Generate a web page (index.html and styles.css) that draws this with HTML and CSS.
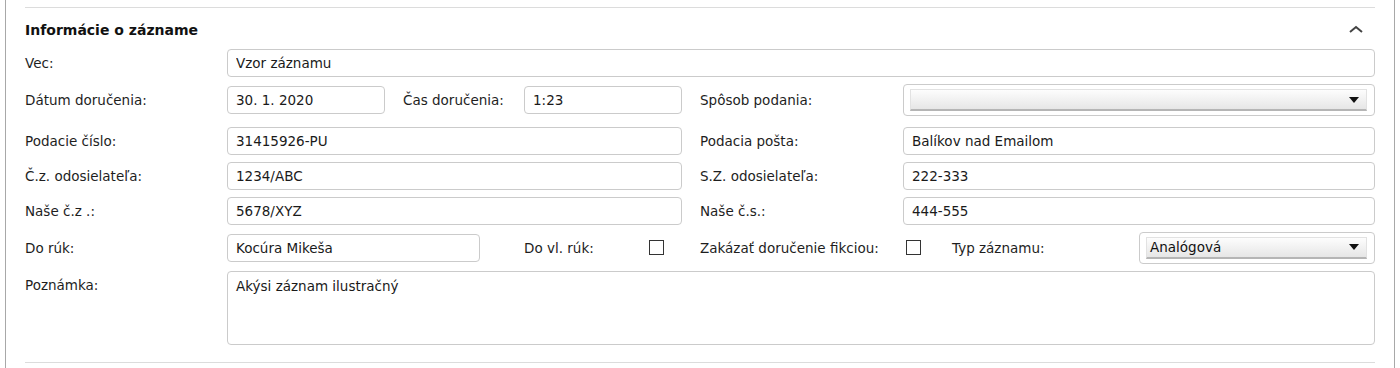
FILE: index.html
```html
<!DOCTYPE html>
<html lang="sk">
<head>
    <meta charset="UTF-8">
    <title>Informácie o zázname</title>
    <link rel="stylesheet" href="styles.css">
</head>
<body>
<div class="panel">
    <div class="section">
        <div class="section-head">
            <h3>Informácie o zázname</h3>
            <svg class="chevron" width="16" height="10" viewBox="0 0 16 10">
                <polyline points="2,8 8,3 14,8" fill="none" stroke="#444" stroke-width="2"/>
            </svg>
        </div>

        <div class="row">
            <label class="lbl">Vec:</label>
            <input class="field grow" type="text" value="Vzor záznamu">
        </div>

        <div class="row row-tall">
            <label class="lbl">Dátum doručenia:</label>
            <input class="field w-short" type="text" value="30. 1. 2020">
            <label class="lbl-mid">Čas doručenia:</label>
            <input class="field w-short" type="text" value="1:23">
            <label class="lbl-right">Spôsob podania:</label>
            <div class="select-wrap grow">
                <div class="select"><span></span><i class="arrow"></i></div>
            </div>
        </div>

        <div class="row">
            <label class="lbl">Podacie číslo:</label>
            <input class="field w-half" type="text" value="31415926-PU">
            <label class="lbl-right">Podacia pošta:</label>
            <input class="field grow" type="text" value="Balíkov nad Emailom">
        </div>

        <div class="row">
            <label class="lbl">Č.z. odosielateľa:</label>
            <input class="field w-half" type="text" value="1234/ABC">
            <label class="lbl-right">S.Z. odosielateľa:</label>
            <input class="field grow" type="text" value="222-333">
        </div>

        <div class="row row-5">
            <label class="lbl">Naše č.z .:</label>
            <input class="field w-half" type="text" value="5678/XYZ">
            <label class="lbl-right">Naše č.s.:</label>
            <input class="field grow" type="text" value="444-555">
        </div>

        <div class="row row-6">
            <label class="lbl">Do rúk:</label>
            <input class="field w-hands" type="text" value="Kocúra Mikeša">
            <label class="lbl-own">Do vl. rúk:</label>
            <span class="check"></span>
            <label class="lbl-fiction">Zakázať doručenie fikciou:</label>
            <span class="check"></span>
            <label class="lbl-type">Typ záznamu:</label>
            <div class="select-wrap grow">
                <div class="select"><span>Analógová</span><i class="arrow"></i></div>
            </div>
        </div>

        <div class="row row-note">
            <label class="lbl lbl-top">Poznámka:</label>
            <textarea class="note grow">Akýsi záznam ilustračný</textarea>
        </div>
    </div>
</div>
</body>
</html>
```
FILE: styles.css
```css
body {
    margin: 0;
    font-family: "DejaVu Sans", sans-serif;
    font-size: 13.5px;
    color: #1e1e1e;
    background: #fff;
}
.panel {
    box-sizing: border-box;
    width: 1390px;
    height: 368px;
    margin-left: 5px;
    padding: 7px 19px 0;
    border-left: 1px solid #a8a8a8;
    border-right: 1px solid #a8a8a8;
}
.section {
    border-top: 1px solid #dcdcdc;
    border-bottom: 1px solid #dcdcdc;
    padding-bottom: 17px;
}
.section-head {
    display: flex;
    align-items: center;
    justify-content: space-between;
    height: 20px;
    padding: 12px 11px 9px 0;
}
.section-head h3 {
    margin: 0;
    font-size: 14px;
    font-weight: bold;
    color: #111;
}
.chevron {
    display: block;
    margin-top: -3px;
}
.row {
    display: flex;
    align-items: center;
    min-height: 28px;
    margin-bottom: 7px;
}
.row-tall {
    min-height: 31px;
    margin-bottom: 11px;
}
.row-5 {
    margin-bottom: 6px;
}
.row-6 {
    min-height: 33px;
}
.row-note {
    align-items: flex-start;
    margin-bottom: 0;
}
label {
    line-height: 20px;
    white-space: nowrap;
}
.lbl {
    width: 202px;
    flex: none;
}
.lbl-top {
    padding-top: 4px;
}
.lbl-mid {
    width: 121px;
    margin-left: 18px;
    flex: none;
}
.lbl-right {
    width: 203px;
    margin-left: 18px;
    flex: none;
}
.lbl-own {
    width: 125px;
    margin-left: 44px;
    flex: none;
}
.lbl-fiction {
    width: 206px;
    margin-left: 36px;
    flex: none;
}
.lbl-type {
    width: 187px;
    margin-left: 31px;
    flex: none;
}
.field, .note {
    box-sizing: border-box;
    height: 28px;
    padding: 0 8px;
    border: 1px solid #cbcbcb;
    border-radius: 4px;
    font-family: "DejaVu Sans", sans-serif;
    font-size: 13.5px;
    color: #1a1a1a;
    background: #fff;
}
.grow {
    flex: 1;
    min-width: 0;
}
.w-short {
    width: 158px;
}
.w-half {
    width: 455px;
}
.w-hands {
    width: 253px;
}
.note {
    height: 74px;
    padding: 4px 8px;
    line-height: 20px;
    resize: none;
}
.check {
    box-sizing: border-box;
    width: 15px;
    height: 15px;
    flex: none;
    border: 1px solid #333;
    background: #fff;
}
.select-wrap {
    box-sizing: border-box;
    height: 32px;
    padding: 4px 7px 4px 6px;
    border: 1px solid #cbcbcb;
    border-radius: 4px;
}
.select {
    box-sizing: border-box;
    display: flex;
    align-items: center;
    justify-content: space-between;
    height: 22px;
    padding: 0 7px 0 3px;
    border: 1px solid #e2e2e2;
    border-bottom: 2px solid #b5b5b5;
    background: linear-gradient(#fdfdfd, #e6e6e6);
    color: #111;
}
.arrow {
    width: 0;
    height: 0;
    border-left: 5px solid transparent;
    border-right: 5px solid transparent;
    border-top: 6px solid #111;
}
```
